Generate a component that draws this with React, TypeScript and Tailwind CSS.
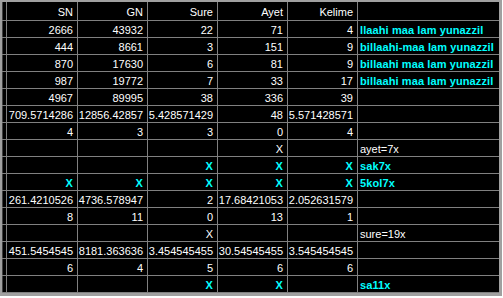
import React from "react";

type Cell = string | { t: string; c?: boolean; w?: boolean };

const rows: Cell[][] = [
  ["2666", "43932", "22", "71", "4", { t: "llaahi maa lam yunazzil", c: true }],
  ["444", "8661", "3", "151", "9", { t: "billaahi-maa lam yunazzil", c: true }],
  ["870", "17630", "6", "81", "9", { t: "billaahi maa lam yunazzil", c: true }],
  ["987", "19772", "7", "33", "17", { t: "billaahi maa lam yunazzil", c: true }],
  ["4967", "89995", "38", "336", "39", ""],
  ["709.5714286", "12856.42857", "5.428571429", "48", "5.571428571", ""],
  ["4", "3", "3", "0", "4", ""],
  ["", "", "", "X", "", "ayet=7x"],
  ["", "", { t: "X", c: true }, { t: "X", c: true }, { t: "X", c: true }, { t: "sak7x", c: true }],
  [
    { t: "X", c: true },
    { t: "X", c: true },
    { t: "X", c: true },
    { t: "X", c: true },
    { t: "X", c: true },
    { t: "5kol7x", c: true },
  ],
  ["261.4210526", "4736.578947", "2", "17.68421053", "2.052631579", ""],
  ["8", "11", "0", "13", "1", ""],
  ["", "", "X", "", "", "sure=19x"],
  ["451.5454545", "8181.363636", "3.454545455", "30.54545455", "3.545454545", ""],
  ["6", "4", "5", "6", "6", ""],
  ["", "", { t: "X", c: true }, { t: "X", c: true }, "", { t: "sa11x", c: true }],
];

const headers = ["SN", "GN", "Sure", "Ayet", "Kelime", ""];

function renderCell(cell: Cell, col: number, key: string) {
  const obj = typeof cell === "string" ? { t: cell } : cell;
  const last = col === 5;
  const cyan = !!obj.c;
  return (
    <div
      key={key}
      className={
        "bg-black h-[16px] leading-[18px] overflow-hidden whitespace-nowrap text-[11px] " +
        (last ? "text-left pl-[2px] " : "text-right pr-[4px] ") +
        (cyan ? "text-[#00ffff] font-bold tracking-[0.1px]" : "text-white")
      }
    >
      {obj.t}
    </div>
  );
}

export default function App() {
  return (
    <div className="w-[503px] h-[298px] bg-white" style={{ fontFamily: '"Liberation Sans", Arial, sans-serif' }}>
      <div className="w-[502px] h-[296px] border-t-2 border-l-2 border-r-[3px] border-b-[3px] border-[#a0a0a0] bg-[#808080] pb-px">
        <div className="grid grid-cols-[4px_70px_69px_69px_69px_69px_141px] gap-px">
          <div className="bg-black h-[18px] border-l border-[#404040]" />
          {headers.map((h, i) => (
            <div
              key={"h" + i}
              className="bg-black h-[18px] leading-[21px] text-white text-[11px] text-right pr-[4px] whitespace-nowrap overflow-hidden"
            >
              {h}
            </div>
          ))}
          {rows.map((r, ri) => (
            <React.Fragment key={"r" + ri}>
              <div className="bg-black h-[16px] border-l border-[#404040]" />
              {r.map((c, ci) => renderCell(c, ci, ri + "-" + ci))}
            </React.Fragment>
          ))}
        </div>
      </div>
    </div>
  );
}
